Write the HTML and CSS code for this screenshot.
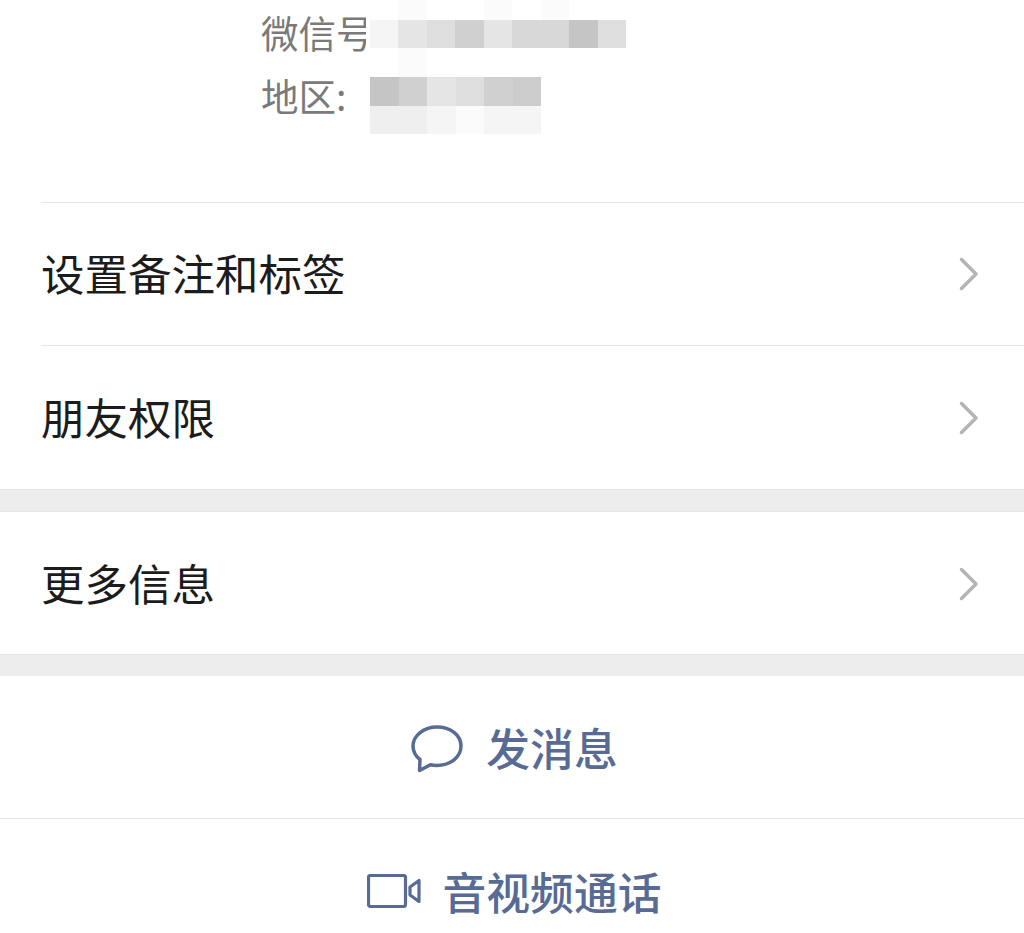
FILE: index.html
```html
<!DOCTYPE html>
<html lang="zh-CN">
<head>
<meta charset="utf-8">
<title>详细资料</title>
<link rel="stylesheet" href="styles.css">
</head>
<body>
<main class="page">
  <section class="profile">
    <div class="info-line">微信号</div>
    <div class="info-line">地区:</div>
    <div class="mosaic mosaic-id" aria-hidden="true">
      <i class="s0"></i><i class="s1"></i><i class="s0"></i><i class="s0"></i><i class="s1"></i><i class="s0"></i><i class="s1"></i><i class="s0"></i><i class="s0"></i>
      <i class="s2"></i><i class="s4"></i><i class="s5"></i><i class="s7"></i><i class="s4"></i><i class="s6"></i><i class="s6"></i><i class="s8"></i><i class="s5"></i>
      <i class="s0"></i><i class="s1"></i><i class="s0"></i><i class="s0"></i><i class="s0"></i><i class="s0"></i><i class="s0"></i><i class="s0"></i><i class="s0"></i>
    </div>
    <div class="mosaic mosaic-region" aria-hidden="true">
      <i class="s8"></i><i class="s7"></i><i class="s4"></i><i class="s5"></i><i class="s7"></i><i class="s7b"></i>
      <i class="s3"></i><i class="s3"></i><i class="s2"></i><i class="s1"></i><i class="s2"></i><i class="s2"></i>
    </div>
  </section>

  <section class="group">
    <a class="row row-first">
      <span>设置备注和标签</span>
      <svg class="chevron" viewBox="0 0 20 34"><path d="M2.5 2.5 17 17 2.5 31.5"/></svg>
    </a>
    <a class="row row-second">
      <span>朋友权限</span>
      <svg class="chevron" viewBox="0 0 20 34"><path d="M2.5 2.5 17 17 2.5 31.5"/></svg>
    </a>
  </section>

  <div class="gap"></div>

  <section class="group">
    <a class="row row-first row-third">
      <span>更多信息</span>
      <svg class="chevron" viewBox="0 0 20 34"><path d="M2.5 2.5 17 17 2.5 31.5"/></svg>
    </a>
  </section>

  <div class="gap gap-small"></div>

  <section class="actions">
    <a class="action">
      <svg class="icon-chat" viewBox="0 0 52 48"><path d="M26 2C13 2 2 10.500 2 21c0 5.500 2.500 10 7 13.500L8.500 45.500l11-5.700c2 .4 4.500.6 6.500.6 13.500 0 24-8.500 24-19.400S39.500 2 26 2Z"/></svg>
      <span>发消息</span>
    </a>
    <a class="action action-last">
      <svg class="icon-video" viewBox="0 0 54 34"><rect x="1.500" y="1.500" width="37" height="31" rx="2"/><path d="M52 6.500v21l-9-6.500v-8Z"/></svg>
      <span>音视频通话</span>
    </a>
  </section>
</main>
</body>
</html>
```

FILE: styles.css
```css
* { box-sizing: border-box; }
html, body { margin: 0; padding: 0; background: #fff; }
body {
  font-family: "Noto Sans CJK SC", "Liberation Sans", sans-serif;
  overflow: hidden;
  height: 933px;
}
.page { width: 1024px; }

.profile {
  position: relative;
  height: 203px;
  padding: 0 0 0 261px;
  overflow: hidden;
}
.profile::after {
  content: "";
  position: absolute;
  left: 41px;
  right: 0;
  bottom: 0;
  height: 1px;
  background: #e6e6e6;
}
.info-line {
  font-size: 37.500px;
  line-height: 63px;
  color: #7a7a7a;
}
.mosaic {
  position: absolute;
  display: grid;
  grid-auto-rows: 28.500px;
  background: #fff;
}
.mosaic-id {
  left: 366px;
  top: -9px;
  width: 260px;
  padding-left: 4px;
  grid-template-columns: repeat(9, 1fr);
}
.mosaic-region {
  left: 370px;
  top: 77px;
  width: 171px;
  grid-template-columns: repeat(6, 1fr);
}
.s0 { background: #fff; }
.s1 { background: #fbfbfb; }
.s2 { background: #f5f5f5; }
.s3 { background: #efefef; }
.s4 { background: #e5e5e5; }
.s5 { background: #dedede; }
.s6 { background: #d8d8d8; }
.s7 { background: #d0d0d0; }
.s7b { background: #cccccc; }
.s8 { background: #c5c5c5; }

.row {
  position: relative;
  display: flex;
  align-items: center;
  justify-content: space-between;
  padding: 0 45px 0 41px;
  font-size: 43.500px;
  color: #1c1c1c;
}
.row span { margin-bottom: 3px; }
.row-first { height: 142px; }
.row-third { padding-top: 2px; }
.row-second {
  height: 144px;
  border-top: 1px solid #e6e6e6;
}
.row-second::before {
  content: "";
  position: absolute;
  left: 0;
  top: -1px;
  width: 41px;
  height: 1px;
  background: #fff;
}
.chevron {
  width: 20px;
  height: 34px;
  fill: none;
  stroke: #b4b4b4;
  stroke-width: 3.500px;
  stroke-linecap: round;
  stroke-linejoin: round;
}

.gap {
  height: 23px;
  background: #ededed;
  border-top: 1px solid #e6e6e6;
  border-bottom: 1px solid #e6e6e6;
}
.gap-small {
  height: 22px;
  border-top: 1px solid #e6e6e6;
  border-bottom: 0;
}

.action {
  display: flex;
  align-items: center;
  justify-content: center;
  gap: 23.500px;
  height: 143px;
  padding-left: 4.500px;
  font-size: 43.800px;
  font-weight: 500;
  color: #576b95;
  border-bottom: 1px solid #e6e6e6;
}
.action-last { border-bottom: 0; height: 150px; padding-bottom: 6px; gap: 21.500px; }
.icon-chat {
  width: 52px;
  height: 48px;
  margin-top: 3px;
  fill: none;
  stroke: #576b95;
  stroke-width: 3.500px;
  stroke-linejoin: round;
}
.icon-video {
  width: 54px;
  height: 34px;
  fill: none;
  stroke: #576b95;
  stroke-width: 3.200px;
  stroke-linejoin: round;
}
```
